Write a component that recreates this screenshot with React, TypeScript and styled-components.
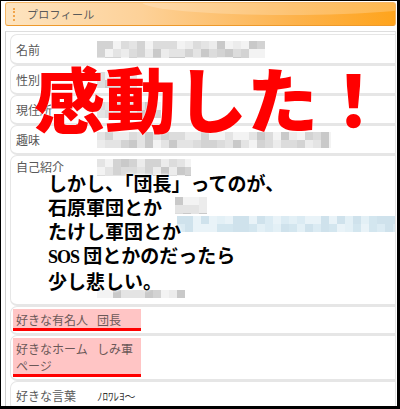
import React from "react";
import styled, { createGlobalStyle } from "styled-components";

const GlobalStyle = createGlobalStyle`
  html, body {
    margin: 0;
    padding: 0;
    background: #fff;
  }
  body {
    font-family: "Noto Sans CJK JP", "Liberation Sans", sans-serif;
  }
`;

const GRAYS = ["#c9c9c9", "#d3d3d3", "#dcdcdc", "#e4e4e4", "#ececec", "#f3f3f3"];
const BLUES = ["#d3e6ef", "#dbebf3", "#e3f0f6", "#cfe2ec", "#e9f3f8"];

// simple seeded random so the mosaic looks the same every render
function makeRand(seed: number) {
  let s = seed;
  return () => {
    s = (s * 9301 + 49297) % 233280;
    return s / 233280;
  };
}

function cells(x0: number, y0: number, w: number, h: number, cell: number, seed: number, palette: string[]) {
  const rand = makeRand(seed);
  const out: React.ReactNode[] = [];
  for (let y = 0; y < h; y += cell) {
    for (let x = 0; x < w; x += cell) {
      out.push(
        <rect
          key={`${seed}-${x}-${y}`}
          x={x0 + x}
          y={y0 + y}
          width={Math.min(cell, w - x)}
          height={Math.min(cell, h - y)}
          fill={palette[Math.floor(rand() * palette.length)]}
        />
      );
    }
  }
  return out;
}

function Mosaic({ width, height, seed }: { width: number; height: number; seed: number }) {
  return (
    <svg width={width} height={height} style={{ display: "block" }}>
      {cells(0, 0, width, height, 8, seed, GRAYS)}
    </svg>
  );
}

function IntroBlur() {
  return (
    <svg width={298} height={140} style={{ display: "block" }}>
      {cells(0, 0, 94, 17, 8, 11, GRAYS)}
      {cells(78, 38, 32, 17, 8, 23, GRAYS)}
      {cells(80, 57, 218, 16, 8, 37, BLUES)}
      {cells(0, 131, 88, 8, 8, 41, GRAYS)}
    </svg>
  );
}

function App() {
  return (
    <>
      <GlobalStyle />
      <Frame>
        <Header>
          <Grip />
          <HeaderTitle>プロフィール</HeaderTitle>
        </Header>
        <Panel>
          <Row first>
            <Label>名前</Label>
            <Value>
              <Mosaic width={168} height={17} seed={3} />
            </Value>
          </Row>
          <Row>
            <Label>性別</Label>
            <Value>
              <Mosaic width={40} height={16} seed={5} />
            </Value>
          </Row>
          <Row>
            <Label>現住所</Label>
            <Value>
              <Mosaic width={64} height={16} seed={7} />
            </Value>
          </Row>
          <Row>
            <Label>趣味</Label>
            <Value>
              <Mosaic width={234} height={16} seed={9} />
            </Value>
          </Row>
          <IntroRow>
            <Label>自己紹介</Label>
            <Value>
              <IntroBlur />
            </Value>
          </IntroRow>
          <Row highlight>
            <Marked>
              <Label>好きな有名人</Label>
              <Value>団長</Value>
            </Marked>
          </Row>
          <Row highlight>
            <Marked>
              <Label>好きなホームページ</Label>
              <Value>しみ軍</Value>
            </Marked>
          </Row>
          <Row>
            <Label>好きな言葉</Label>
            <SmallValue>ﾉﾛﾜﾚﾖ〜</SmallValue>
          </Row>
        </Panel>

        <Shout>感動した！</Shout>
        <Comment>
          しかし、「団長」ってのが、
          <br />
          石原軍団とか
          <br />
          たけし軍団とか
          <br />
          <Latin>SOS</Latin> 団とかのだったら
          <br />
          少し悲しい。
        </Comment>
      </Frame>
    </>
  );
}

const Frame = styled.div`
  position: relative;
  box-sizing: border-box;
  width: 400px;
  height: 409px;
  overflow: hidden;
  border-style: solid;
  border-color: #000;
  border-width: 1px 3px 3px 1px;
  padding: 1px 1px 0 4px;
  background: #fff;
`;

const Header = styled.div`
  position: relative;
  box-sizing: border-box;
  display: flex;
  align-items: center;
  height: 24px;
  border: 1px solid #f5b665;
  border-bottom-color: #ee9a2c;
  border-radius: 3px;
  background: linear-gradient(to right, #fde4c0 0%, #fdd198 35%, #fdb24a 75%, #ffa41c 100%);
  overflow: hidden;

  &::after {
    content: "";
    position: absolute;
    left: 35%;
    right: -10%;
    top: -14px;
    height: 26px;
    border-radius: 50%;
    background: rgba(255, 255, 255, 0.22);
  }
`;

const Grip = styled.div`
  width: 0;
  height: 13px;
  margin-left: 7px;
  border-left: 2px dotted #f2a54a;
`;

const HeaderTitle = styled.div`
  margin-left: 12px;
  font-size: 11px;
  letter-spacing: 0.3px;
  color: #5a5a5a;
`;

const Panel = styled.div`
  display: flex;
  flex-direction: column;
  margin-top: 5px;
  height: 400px;
  padding: 2px 0 0 4px;
  border-top: 1px solid #dedede;
  border-left: 1px solid #cfcfcf;
  border-right: 1px solid #e4e4e4;
`;

const Row = styled.div<{ first?: boolean; highlight?: boolean }>`
  display: flex;
  align-items: ${(p) => (p.highlight ? "stretch" : "center")};
  flex-shrink: 0;
  border: 1px solid #e6e6e6;
  border-bottom-width: 2px;
  border-right: none;
  border-radius: 7px 0 0 7px;
  padding: ${(p) => (p.highlight ? "2px 0 2px 2px" : p.first ? "6px 0 5px 5px" : "6px 0 5px 5px")};
  min-height: ${(p) => (p.first ? "17px" : "16px")};
  font-size: 12px;
  line-height: 16px;
  color: #595959;
`;

const IntroRow = styled(Row)`
  align-items: flex-start;
  padding: 3px 0 5px 5px;
  height: 140px;
`;

const Marked = styled.div`
  display: flex;
  width: 128px;
  box-sizing: border-box;
  padding: 2px 0 0 3px;
  line-height: 17px;
  background: #ffc5c5;
  border-bottom: 3px solid #ff0000;
  color: #6b5858;
  overflow: hidden;
`;

const Label = styled.div`
  flex-shrink: 0;
  width: 81px;
`;

const Value = styled.div`
  white-space: nowrap;
`;

const SmallValue = styled.div`
  font-size: 11px;
  color: #333;
`;

const Shout = styled.div`
  position: absolute;
  left: 33px;
  top: 60px;
  font-size: 71px;
  line-height: 71px;
  font-weight: 900;
  color: #ff0000;
  white-space: nowrap;
  text-shadow: 0 0 2px #fff;
`;

const Comment = styled.div`
  position: absolute;
  left: 47px;
  top: 170px;
  font-size: 19px;
  line-height: 24px;
  font-weight: 700;
  color: #000;
  white-space: nowrap;
  text-shadow: 0 0 3px #fff, 0 0 3px #fff;
`;

const Latin = styled.span`
  font-family: "Liberation Serif", serif;
  font-size: 18px;
  letter-spacing: -1px;
`;

export default App;
